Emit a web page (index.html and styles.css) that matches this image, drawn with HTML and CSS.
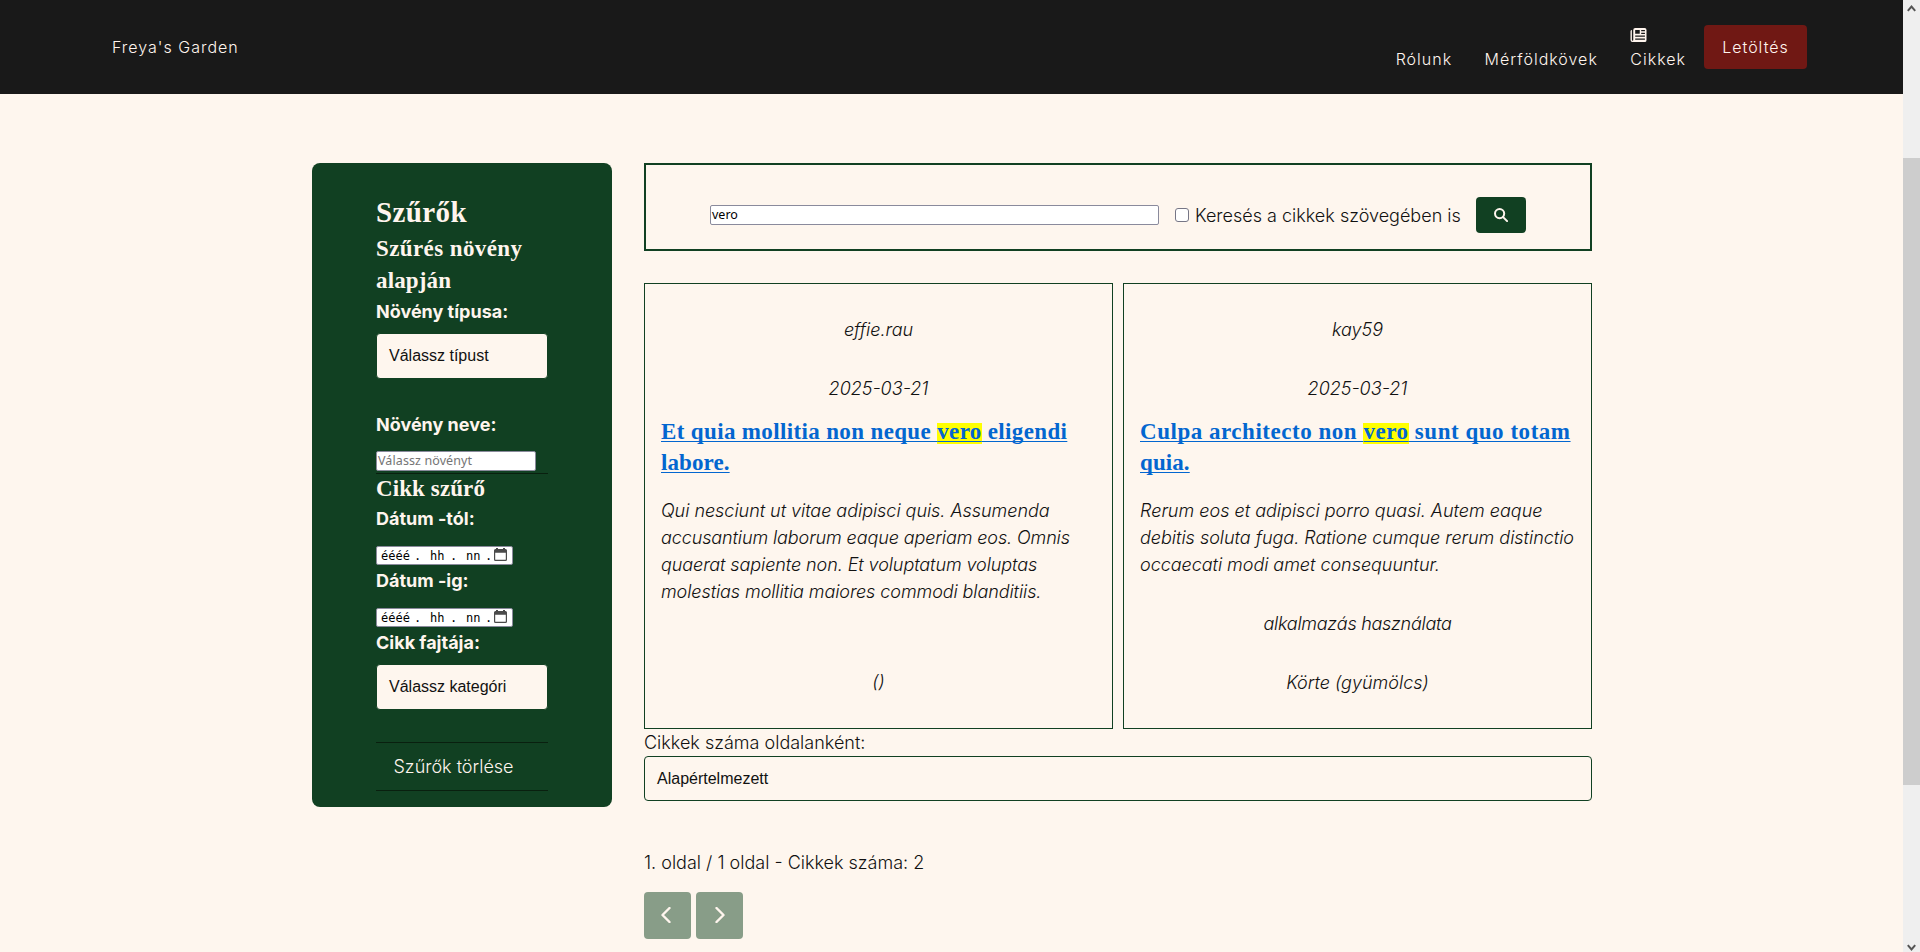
FILE: index.html
```html
<!DOCTYPE html>
<html lang="hu">
<head>
<meta charset="utf-8">
<title>Freya's Garden</title>
<link rel="stylesheet" href="styles.css">
</head>
<body>
<div class="page">
  <header class="navbar">
    <a class="brand">Freya's Garden</a>
    <nav class="nav">
      <a class="nav-link">Rólunk</a>
      <a class="nav-link">Mérföldkövek</a>
      <a class="nav-link articles"><svg class="news" viewBox="0 0 512 448"><path fill-rule="evenodd" d="M152 0h300a60 60 0 0 1 60 60v328a60 60 0 0 1-60 60H64a64 64 0 0 1-64-64V104q0-44 44-44v324a22 22 0 0 0 44 0V64a64 64 0 0 1 64-64zM150 64v120h146V64zM342 62v40h120V62zM342 152v40h120v-40zM150 240v40h312v-40zM150 334v40h312v-40z"/></svg><span>Cikkek</span></a>
    </nav>
    <a class="download">Letöltés</a>
  </header>
  <div class="content">
    <aside class="filters">
      <h2 class="filters-title">Szűrők</h2>
      <h3 class="filters-sub"><span class="s1">Szűrés növény</span><br><span class="s2">alapján</span></h3>
      <label class="flabel">Növény típusa:</label>
      <div class="select light">Válassz típust</div>
      <label class="flabel gap-lg">Növény neve:</label>
      <div class="field plant">Válassz növényt</div>
      <div class="rule"></div>
      <h3 class="filters-sub s3">Cikk szűrő</h3>
      <label class="flabel tight">Dátum -tól:</label>
      <div class="field date"><span>éééé</span><span>.</span><span>hh</span><span>.</span><span>nn</span><span>.</span><svg class="cal" viewBox="0 0 13 14"><path fill-rule="evenodd" d="M2 0h2v1h5V0h2v1h.5A1.500 1.500 0 0 1 13 2.500v9a1.500 1.500 0 0 1-1.500 1.500h-10A1.500 1.500 0 0 1 0 11.500v-9A1.500 1.500 0 0 1 1.500 1H2zM1.200 4.700v6.500q0 .6.600.6h9.400q.6 0 .6-.6V4.700z"/></svg></div>
      <label class="flabel tight">Dátum -ig:</label>
      <div class="field date"><span>éééé</span><span>.</span><span>hh</span><span>.</span><span>nn</span><span>.</span><svg class="cal" viewBox="0 0 13 14"><path fill-rule="evenodd" d="M2 0h2v1h5V0h2v1h.5A1.500 1.500 0 0 1 13 2.500v9a1.500 1.500 0 0 1-1.500 1.500h-10A1.500 1.500 0 0 1 0 11.500v-9A1.500 1.500 0 0 1 1.500 1H2zM1.200 4.700v6.500q0 .6.600.6h9.400q.6 0 .6-.6V4.700z"/></svg></div>
      <label class="flabel tight">Cikk fajtája:</label>
      <div class="select light second">Válassz kategóri</div>
      <a class="clear">Szűrők törlése</a>
    </aside>
    <main class="main">
      <form class="search">
        <div class="field query">vero</div>
        <div class="check"><span class="box"></span><span class="check-label">Keresés a cikkek szövegében is</span></div>
        <div class="search-btn"><svg class="glass" viewBox="0 0 14 14"><circle cx="5.600" cy="5.600" r="4.600"/><path d="M9.100 9.100l4 4"/></svg></div>
      </form>
      <section class="cards">
        <article class="card">
          <p class="meta">effie.rau</p>
          <p class="meta">2025-03-21</p>
          <h3 class="title"><a><span class="t1">Et quia mollitia non neque <mark>vero</mark> eligendi</span><br><span class="t2">labore.</span></a></h3>
          <p class="desc"><span class="k1">Qui nesciunt ut vitae adipisci quis. Assumenda</span><br><span class="k3">accusantium laborum eaque aperiam eos. Omnis</span><br><span class="k2">quaerat sapiente non. Et voluptatum voluptas</span><br><span class="k2">molestias mollitia maiores commodi blanditiis.</span></p>
          <p class="meta bottom">()</p>
        </article>
        <article class="card">
          <p class="meta">kay59</p>
          <p class="meta">2025-03-21</p>
          <h3 class="title"><a><span class="t3">Culpa architecto non <mark>vero</mark> sunt quo totam</span><br><span class="t2">quia.</span></a></h3>
          <p class="desc">Rerum eos et adipisci porro quasi. Autem eaque<br><span class="k0">debitis soluta fuga. Ratione cumque rerum distinctio</span><br><span class="k1">occaecati modi amet consequuntur.</span></p>
          <p class="meta bottom k4">alkalmazás használata</p>
          <p class="meta">Körte (gyümölcs)</p>
        </article>
      </section>
      <label class="perpage">Cikkek száma oldalanként:</label>
      <div class="select outlined">Alapértelmezett</div>
      <p class="summary">1. oldal / 1 oldal - Cikkek száma: 2</p>
      <div class="pager">
        <div class="page-btn prev"><svg class="chev" viewBox="0 0 10 16"><path d="M8.500 1L1.500 8l7 7"/></svg></div>
        <div class="page-btn"><svg class="chev" viewBox="0 0 10 16"><path d="M1.500 1l7 7-7 7"/></svg></div>
      </div>
    </main>
  </div>
</div>
<div class="scrollbar">
  <svg class="arrow" viewBox="0 0 9 7"><path d="M.8 5.800L4.500 1.600l3.700 4.200"/></svg>
  <div class="thumb"></div>
  <svg class="arrow" viewBox="0 0 9 7"><path d="M.8 1.200l3.700 4.200 3.700-4.200"/></svg>
</div>
</body>
</html>
```
FILE: styles.css
```css
* { box-sizing: border-box; }
body {
  margin: 0;
  display: flex;
  height: 952px;
  overflow: hidden;
  background: #fef6ee;
  color: #111;
  font: 300 18px/27px Inter, "Liberation Sans", sans-serif;
}
h2, h3, p { margin: 0; }
.page { width: 1903px; flex: none; }

.navbar {
  height: 94px;
  background: #191919;
  color: #fff5ee;
  display: flex;
  align-items: center;
  padding: 0 96px 0 112px;
  font-size: 16px;
  line-height: 24px;
  letter-spacing: 1px;
}
.nav { display: flex; align-items: flex-end; margin-left: auto; gap: 32.5px; height: 50px; padding-bottom: 1px; }
.nav-link { display: block; }
.articles { display: flex; flex-direction: column; margin-right: 18px; }
.news { width: 17px; height: 14px; fill: #fff5ee; margin-bottom: 5px; }
.download {
  width: 103px;
  height: 44px;
  line-height: 44px;
  border-radius: 4px;
  background: #701814;
  text-align: center;
}

.content { display: flex; gap: 32px; padding: 69px 311px 0 312px; align-items: flex-start; }

.filters {
  width: 300px;
  height: 644px;
  flex: none;
  background: #114022;
  color: #fff5ee;
  border-radius: 8px;
  padding: 32px 64px 0;
}
.filters-title { font: bold 29px/35px "Liberation Serif", serif; letter-spacing: .4px; }
.filters-sub { font: bold 23px/32px "Liberation Serif", serif; white-space: nowrap; padding-top: 3px; margin-bottom: -1px; }
.s1 { letter-spacing: .4px; }
.s2 { letter-spacing: .15px; }
.s3 { padding-top: 0; margin-bottom: 0; line-height: 29px; letter-spacing: .1px; }
.flabel { display: block; font-weight: 700; line-height: 31px; }
.select {
  height: 44px;
  border-radius: 4px;
  font: 16px/42px "Liberation Sans", sans-serif;
  padding: 0 12px;
  white-space: nowrap;
  border: 1px solid #114022;
}
.light { height: 46px; line-height: 44px; background: #fef6ee; color: #111; width: 172px; margin: 6px 0 30px; }
.gap-lg { margin-bottom: 11px; }
.field {
  background: #fff;
  border: 1px solid #8a8a9c;
  border-radius: 2px;
  color: #000;
  font: 12.500px/18px "Noto Sans", sans-serif;
  height: 20px;
  padding-left: 1px;
}
.plant { width: 160px; color: #757575; letter-spacing: .1px; }
.rule { height: 1px; background: #09200f; width: 172px; margin-top: 2px; }
.date {
  display: grid;
  grid-template-columns: 33px 16px 20px 16px 19px 9px 13px;
  width: 137px;
  height: 19px;
  margin-top: 11px;
  padding-left: 4px;
  font: 12px/18px "DejaVu Sans Mono", monospace;
}
.cal { width: 13px; height: 14px; fill: #4a4a4a; margin-top: 1px; }
.tight { line-height: 32px; }
.second { margin: 5px 0 32px; }
.clear {
  display: block;
  width: 172px;
  height: 49px;
  line-height: 48px;
  border-top: 1px solid #09200f;
  border-bottom: 1px solid #09200f;
  padding-left: 17.5px;
}

.main { width: 948px; }
.search {
  height: 88px;
  border: 2px solid #114022;
  padding: 16px 64px 0;
  display: flex;
  align-items: center;
  gap: 16px;
  margin-bottom: 32px;
}
.query { flex: 1; }
.check { display: flex; align-items: center; gap: 6px; width: 285px; white-space: nowrap; }
.box { width: 14px; height: 14px; flex: none; background: #fff; border: 1px solid #767686; border-radius: 3px; }
.search-btn { width: 50px; height: 36px; border-radius: 4px; background: #114022; display: grid; place-items: center; }
.glass { width: 14px; height: 14px; fill: none; stroke: #fff5ee; stroke-width: 2; stroke-linecap: round; }

.cards { display: grid; grid-template-columns: 1fr 1fr; gap: 10px; }
.card { height: 446px; border: 1px solid #114022; padding: 16px 16px 17px; display: flex; flex-direction: column; font-style: italic; }
.meta { text-align: center; padding: 16px 0; }
.bottom { margin-top: auto; }
.title { font: bold 23px/31px "Liberation Serif", serif; color: #0366d0; white-space: nowrap; margin-top: -2px; }
.title a { text-decoration: underline; text-decoration-thickness: 1px; text-underline-offset: 2px; text-decoration-skip-ink: none; }
.title mark { color: inherit; background: linear-gradient(#ff0, #ff0) 0 4px / 100% 21px no-repeat; }
.t1 { letter-spacing: .36px; }
.t2 { letter-spacing: .1px; }
.t3 { letter-spacing: .53px; }
.desc { padding: 19px 0 16px; white-space: nowrap; }
.k0 { letter-spacing: -.02px; }
.k1 { letter-spacing: -.04px; }
.k2 { letter-spacing: -.085px; }
.k3 { letter-spacing: -.11px; }
.k4 { letter-spacing: -.28px; }

.perpage { display: block; }
.outlined { height: 45px; line-height: 44px; }
.summary { margin-top: 48px; margin-bottom: 16px; }
.pager { display: flex; gap: 5px; }
.page-btn { width: 47px; height: 47px; border-radius: 4px; background: #889d88; display: grid; place-items: center; padding-bottom: 1px; }
.prev { padding-right: 3px; }
.chev { width: 10px; height: 16px; fill: none; stroke: #fff5ee; stroke-width: 2.4; stroke-linecap: round; stroke-linejoin: round; }

.scrollbar { width: 17px; background: #efefef; display: flex; flex-direction: column; align-items: center; justify-content: space-between; padding: 5px 0 1px; }
.thumb { width: 17px; height: 627px; background: #cdcdcd; margin-bottom: 14px; }
.arrow { width: 9px; height: 7px; fill: none; stroke: #555; stroke-width: 2; }
```
